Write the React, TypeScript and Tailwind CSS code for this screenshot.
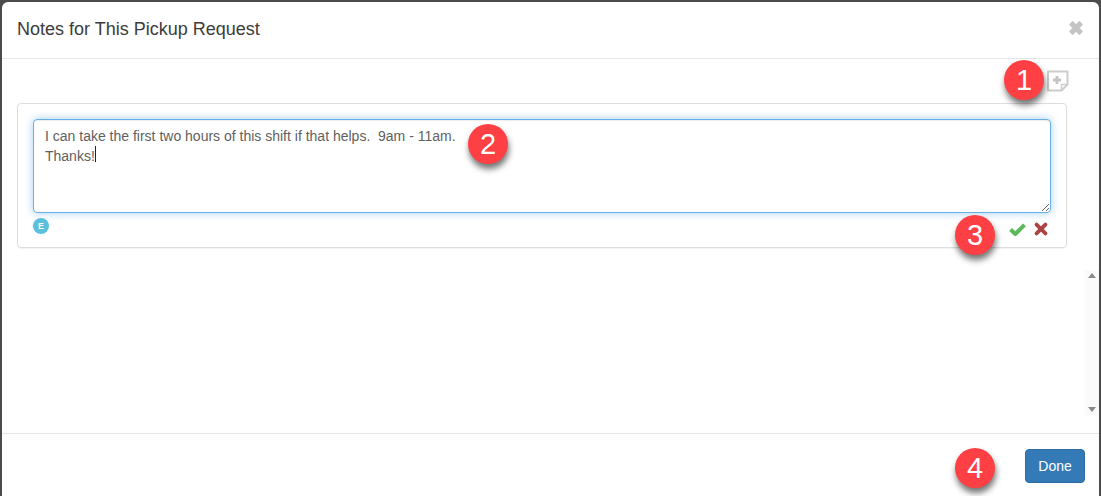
import React from "react";

function Badge({ n, className }: { n: string; className: string }) {
  return (
    <div
      className={
        "absolute flex h-10 w-10 items-center justify-center rounded-full bg-[#fe3f43] text-[29px] leading-none text-white shadow-[1px_5px_6px_rgba(0,0,0,0.55)] " +
        className
      }
    >
      {n}
    </div>
  );
}

export default function App() {
  return (
    <div className="relative h-[496px] w-[1101px] overflow-hidden bg-[#4b4b4b] pl-[2px] pr-[2px] pt-[2px] font-['Liberation_Sans',Arial,sans-serif] text-[#3c3c3c]">
      <div className="flex h-[494px] flex-col rounded-t-[6px] bg-white">
        <header className="flex h-[57px] shrink-0 items-center justify-between border-b border-[#e5e5e5] pl-[15px] pr-[14px]">
          <h1 className="mb-[2px] text-[18px] leading-[20px]">Notes for This Pickup Request</h1>
          <svg width="18" height="18" viewBox="0 0 16 16" className="mb-[4px]" aria-label="Close">
            <path d="M2.500 5 5 2.500 8 5.500 11 2.500 13.500 5 10.500 8 13.500 11 11 13.500 8 10.500 5 13.500 2.500 11 5.500 8Z" fill="#c4c4c4" stroke="#c4c4c4" strokeWidth="1.200" strokeLinejoin="round" />
          </svg>
        </header>

        <main className="relative min-h-0 flex-1 px-[15px]">
          <div className="flex h-[44px] justify-end pr-[15px] pt-[11px]">
            <svg width="23" height="22" viewBox="0 0 23 22" fill="none" aria-label="Add note">
              <path d="M2 1.500H21.500V14.500L15.500 20.500H2Z" stroke="#cccccc" strokeWidth="2" strokeLinejoin="round" />
              <path d="M15.500 20.500V14.500H21.500" stroke="#cccccc" strokeWidth="1.500" />
              <path d="M11 6V14M7 10H15" stroke="#c4c4c4" strokeWidth="2.800" />
            </svg>
          </div>
          <section className="mr-[17px] h-[145px] rounded-[4px] border border-[#dddddd] px-[15px] pt-[15px] shadow-[0_1px_1px_rgba(0,0,0,0.05)]">
            <div className="relative h-[94px]">
              <textarea
                readOnly
                defaultValue={"I can take the first two hours of this shift if that helps.  9am - 11am.\nThanks!"}
                className="block h-[94px] w-full resize-y rounded-[4px] border border-[#66afe9] px-[11px] py-[6px] text-[14px] leading-[20px] text-[#5f5f5f] shadow-[inset_0_1px_1px_rgba(0,0,0,0.075),0_0_8px_rgba(102,175,233,0.6)] outline-none"
              />
              <span className="absolute left-[62px] top-[27px] h-[16px] w-[1px] bg-[#222]" />
            </div>
            <div className="flex items-start justify-between pt-[5px]">
              <span className="flex h-[16px] w-[16px] items-center justify-center rounded-full bg-[#5bc0de] text-[9px] font-bold leading-none text-white">E</span>
              <div className="mr-[3px] mt-[4px] flex items-center gap-[8px]">
                <svg width="17" height="14" viewBox="0 0 17 14" aria-label="Save">
                  <path d="M1.500 7.500 6.300 12 15.500 2.800" fill="none" stroke="#5cb85c" strokeWidth="4" strokeLinejoin="round" />
                </svg>
                <svg width="14" height="14" viewBox="0 0 14 14" aria-label="Cancel">
                  <path d="M2.600 2.600 11.400 11.400M11.400 2.600 2.600 11.400" fill="none" stroke="#a94442" strokeWidth="3.800" strokeLinecap="round" />
                </svg>
              </div>
            </div>
          </section>
          <div className="absolute right-0 top-[211px] flex h-[145px] w-[14px] flex-col items-center justify-between bg-[#fafafa] py-[3px]">
            <span className="h-0 w-0 border-x-[4px] border-b-[5px] border-x-transparent border-b-[#8a8a8a]" />
            <span className="h-0 w-0 border-x-[4px] border-t-[5px] border-x-transparent border-t-[#8a8a8a]" />
          </div>
        </main>

        <footer className="flex h-[63px] shrink-0 items-start justify-end border-t border-[#e5e5e5] pr-[14px] pt-[15px]">
          <button className="h-[34px] w-[60px] rounded-[4px] border border-[#2e6da4] bg-[#337ab7] text-[14px] leading-[20px] text-white">Done</button>
        </footer>
      </div>

      <Badge n="1" className="left-[1004px] top-[60px]" />
      <Badge n="2" className="left-[468px] top-[124px]" />
      <Badge n="3" className="left-[955px] top-[215px]" />
      <Badge n="4" className="left-[955px] top-[448px]" />
    </div>
  );
}
